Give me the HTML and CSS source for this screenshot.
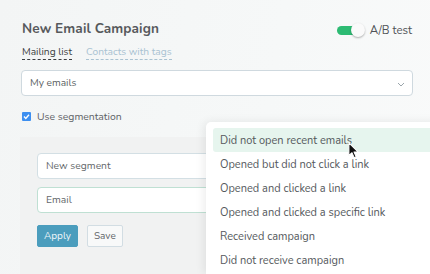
FILE: index.html
```html
<!DOCTYPE html>
<html>
<head>
<meta charset="utf-8">
<link rel="stylesheet" href="styles.css">
</head>
<body>
<div class="page">
  <div class="header">
    <h1 class="title">New Email Campaign</h1>
    <div class="ab">
      <span class="toggle"><span class="knob"></span></span>
      <span class="ab-label">A/B test</span>
    </div>
  </div>
  <div class="tabs">
    <span class="tab active">Mailing list</span>
    <span class="tab">Contacts with tags</span>
  </div>
  <div class="select">
    <span>My emails</span>
    <svg class="chev" width="8" height="5" viewBox="0 0 8 5"><path d="M1 1l3 3 3-3" fill="none" stroke="#9aa5ab" stroke-width="1"/></svg>
  </div>
  <label class="check">
    <span class="box"><svg width="9" height="9" viewBox="0 0 9 9"><path d="M2 4.6l1.8 1.8L7 2.8" fill="none" stroke="#fff" stroke-width="1.4"/></svg></span>
    <span>Use segmentation</span>
  </label>
  <div class="card">
    <div class="input">New segment</div>
    <div class="input green">Email</div>
    <div class="buttons">
      <span class="btn primary">Apply</span>
      <span class="btn">Save</span>
    </div>
  </div>
  <div class="menu">
    <div class="item hover">Did not open recent emails</div>
    <div class="item">Opened but did not click a link</div>
    <div class="item">Opened and clicked a link</div>
    <div class="item">Opened and clicked a specific link</div>
    <div class="item">Received campaign</div>
    <div class="item">Did not receive campaign</div>
  </div>
  <svg class="cursor" width="12" height="17" viewBox="0 0 14 20"><path d="M1 1v15l3.6-3.4 2.6 5.8 2.4-1-2.6-5.6H12z" fill="#111" stroke="#fff" stroke-width="1.2" stroke-linejoin="round"/></svg>
</div>
</body>
</html>
```
FILE: styles.css
```css
html, body { margin: 0; padding: 0; }
body {
  width: 430px; height: 274px; overflow: hidden;
  font-family: "Nunito", "Lato", "Open Sans", sans-serif;
  background: linear-gradient(100deg, #f3f5f5 0%, #f6f8f8 60%, #f9fafa 100%);
  color: #5f6468;
}
.page { position: relative; padding: 17px 17px 0 21px; height: 274px; box-sizing: border-box; overflow: hidden; }
.header { display: flex; justify-content: space-between; align-items: center; height: 22px; }
.title { margin: 0 0 0 1px; font-size: 13.6px; font-weight: 700; color: #57595c; letter-spacing: 0.1px; }
.ab { display: flex; align-items: center; gap: 9px; margin-right: 1px; margin-top: 4px; }
.toggle { position: relative; width: 24px; height: 9px; border-radius: 5px; background: #2dbb73; }
.knob { position: absolute; left: 14px; top: -3px; width: 14px; height: 14px; border-radius: 50%; background: #fafafa; box-shadow: 0 1px 2px rgba(0,0,0,0.3); }
.ab-label { font-size: 11.5px; color: #4f5357; }
.tabs { display: flex; gap: 14px; margin: 7px 0 0 1px; font-size: 10.2px; }
.tab { color: #a9c2d2; border-bottom: 1px dashed #a9c2d2; line-height: 13px; padding-bottom: 0; }
.tab.active { color: #3a3d40; border-bottom: 1px dashed #3a3d40; }
.select {
  margin-top: 10px; height: 26px; box-sizing: border-box; width: 392px;
  background: #fff; border: 1px solid #cfd9df; border-radius: 4px;
  display: flex; align-items: center; justify-content: space-between;
  padding: 0 7px 0 8px; font-size: 10.2px; color: #5b5f63;
}
.chev { margin-top: 2px; }
.check { display: flex; align-items: center; gap: 6px; margin: 13px 0 0 1px; font-size: 10.4px; color: #5e6266; }
.box { width: 9px; height: 9px; background: #3d8ff0; border-radius: 1px; display: flex; }
.card {
  margin-top: 13px; margin-left: -1px; width: 240px; height: 140px; background: #f1f2f2;
  padding: 16px 0 0 17px; box-sizing: border-box;
}
.input {
  height: 26px; box-sizing: border-box; background: #fff; border: 1px solid #d3dfe4;
  border-radius: 4px; padding-left: 8px; display: flex; align-items: center;
  font-size: 10.3px; color: #64686b; margin-bottom: 8px;
}
.input.green { border-color: #bfe0d3; }
.buttons { display: flex; gap: 9px; margin-top: 12px; }
.btn {
  height: 22px; box-sizing: border-box; padding: 0 6px; display: flex; align-items: center;
  border: 1px solid #d2dde3; background: #f8f9f9; border-radius: 2px; font-size: 10px; color: #5f6468;
}
.btn.primary { background: #4b9dbd; border-color: #4b9dbd; color: #eef6fa; padding: 0 6px; }
.menu {
  position: absolute; left: 206px; top: 122px; width: 240px; height: 152px;
  background: #fff; border-radius: 5px 0 0 0; box-shadow: -2px 0 10px rgba(0,0,0,0.08);
  padding: 6px 0 0 7px; box-sizing: border-box; overflow: hidden;
}
.item { height: 24px; flex: none; display: flex; align-items: center; padding-left: 7px; font-size: 11px; color: #54585c; }
.item.hover { background: #e6f5ee; border-radius: 3px; }
.cursor { position: absolute; left: 348px; top: 142px; }
```
